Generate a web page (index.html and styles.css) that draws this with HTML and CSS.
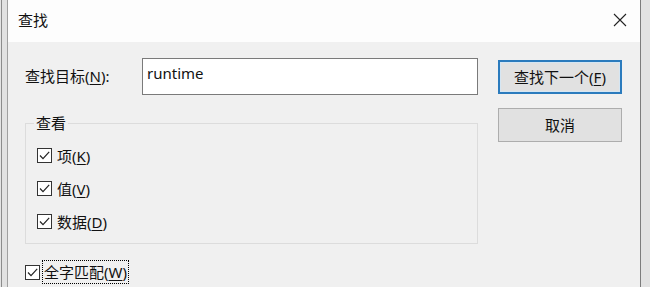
FILE: index.html
```html
<!DOCTYPE html>
<html lang="zh-CN">
<head>
<meta charset="utf-8">
<title>查找</title>
<link rel="stylesheet" href="styles.css">
</head>
<body>
<div class="window">
  <div class="titlebar">
    <span class="title">查找</span>
    <svg class="close" width="14" height="14" viewBox="0 0 14 14"><path d="M1 1L13 13M13 1L1 13" stroke="#222" stroke-width="1.1" fill="none"/></svg>
  </div>
  <div class="content">
    <div class="left">
      <div class="find-row">
        <label class="find-label">查找目标(<u>N</u>):</label>
        <div class="input">runtime</div>
      </div>
      <fieldset class="group">
        <legend>查看</legend>
        <div class="check-row">
          <span class="box"><svg width="13" height="13" viewBox="0 0 13 13"><path d="M2 6.5L5 9.6L11.2 2.8" stroke="#222" stroke-width="1.2" fill="none"/></svg></span>
          <span class="check-text">项(<u>K</u>)</span>
        </div>
        <div class="check-row">
          <span class="box"><svg width="13" height="13" viewBox="0 0 13 13"><path d="M2 6.5L5 9.6L11.2 2.8" stroke="#222" stroke-width="1.2" fill="none"/></svg></span>
          <span class="check-text">值(<u>V</u>)</span>
        </div>
        <div class="check-row">
          <span class="box"><svg width="13" height="13" viewBox="0 0 13 13"><path d="M2 6.5L5 9.6L11.2 2.8" stroke="#222" stroke-width="1.2" fill="none"/></svg></span>
          <span class="check-text">数据(<u>D</u>)</span>
        </div>
      </fieldset>
      <div class="whole-row">
        <span class="box"><svg width="13" height="13" viewBox="0 0 13 13"><path d="M2 6.5L5 9.6L11.2 2.8" stroke="#222" stroke-width="1.2" fill="none"/></svg></span>
        <span class="focus-text">全字匹配(<u>W</u>)</span>
      </div>
    </div>
    <div class="right">
      <div class="btn btn-default">查找下一个(<u>F</u>)</div>
      <div class="btn">取消</div>
    </div>
  </div>
</div>
</body>
</html>
```

FILE: styles.css
```css
html {
  background: #e4e4e4;
}
body {
  margin: 0 0 0 1px;
  border-left: 1px solid #8c8c8c;
  background: #e2e2e2;
  width: 648px;
  height: 287px;
  overflow: hidden;
  font-family: "Noto Sans", "Noto Sans CJK SC", sans-serif;
  font-size: 15px;
  color: #111;
}
.window {
  margin-left: 5px;
  width: 632px;
  height: 287px;
  border-left: 1px solid #a0a0a0;
  border-right: 1px solid #7c7c7c;
  display: flex;
  flex-direction: column;
}
.titlebar {
  height: 40px;
  flex: none;
  background: #fdfdfd;
  display: flex;
  align-items: center;
  justify-content: space-between;
  padding: 0 13px 2px 10px;
}
.title {
  font-size: 15px;
  line-height: 20px;
}
.close {
  display: block;
}
.content {
  flex: 1;
  background: #f0f0f0;
  display: grid;
  grid-template-columns: 453px 124px;
  column-gap: 20px;
  align-items: start;
  padding: 16px 0 0 17px;
}
.left {
  display: flex;
  flex-direction: column;
}
.find-row {
  display: flex;
  align-items: center;
  height: 37px;
}
.find-label {
  width: 117px;
  line-height: 20px;
  padding-bottom: 1px;
}
.input {
  box-sizing: border-box;
  width: 336px;
  height: 37px;
  border: 1px solid #7a7a7a;
  background: #fff;
  padding: 4px 0 0 4px;
  line-height: 20px;
  font-size: 15px;
}
u {
  text-decoration-thickness: 1px;
  text-underline-offset: 2px;
}
.group {
  margin: 18px 0 0 0;
  border: 1px solid #dcdcdc;
  padding: 6px 0 5px 8px;
  min-width: 0;
}
.group legend {
  padding: 0 2px;
  line-height: 20px;
}
.check-row {
  display: flex;
  align-items: center;
  height: 33px;
  margin-left: 3px;
  gap: 5px;
}
.check-text {
  line-height: 20px;
}
.box {
  box-sizing: border-box;
  width: 15px;
  height: 15px;
  border: 1px solid #333;
  background: #fff;
  display: flex;
  align-items: center;
  justify-content: center;
  flex: none;
}
.box svg {
  display: block;
}
.whole-row {
  display: flex;
  align-items: center;
  height: 24px;
  margin-top: 16px;
  gap: 2px;
}
.focus-text {
  border: 1px dotted #000;
  padding: 1px;
  line-height: 20px;
}
.btn {
  box-sizing: border-box;
  height: 34px;
  background: #e1e1e1;
  border: 1px solid #adadad;
  display: flex;
  align-items: center;
  justify-content: center;
  line-height: 20px;
  font-size: 15px;
}
.btn-default {
  margin-top: 2px;
  border: 2px solid #2b7bbd;
  box-shadow: inset 0 0 0 1px #d5e6f3;
}
.btn + .btn {
  margin-top: 14px;
}
```
